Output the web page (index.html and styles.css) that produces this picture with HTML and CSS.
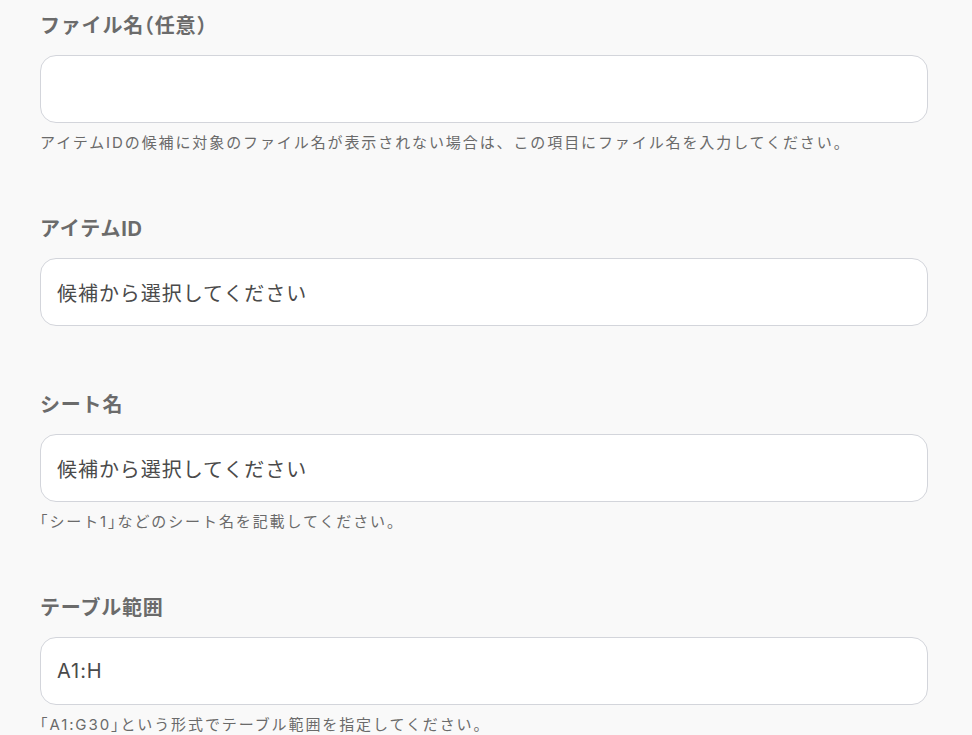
FILE: index.html
```html
<!DOCTYPE html>
<html lang="ja">
<head>
<meta charset="utf-8">
<link rel="stylesheet" href="styles.css">
</head>
<body>
<div class="form">
  <div class="field">
    <div class="label">ファイル名<span class="half">（</span>任意<span class="half">）</span></div>
    <div class="input"></div>
    <div class="hint">アイテムIDの候補に対象のファイル名が表示されない場合は、この項目にファイル名を入力してください。</div>
  </div>
  <div class="field field--nohint">
    <div class="label">アイテムID</div>
    <div class="input">候補から選択してください</div>
  </div>
  <div class="field">
    <div class="label">シート名</div>
    <div class="input">候補から選択してください</div>
    <div class="hint"><span class="half">「</span>シート1<span class="half">」</span>などのシート名を記載してください。</div>
  </div>
  <div class="field">
    <div class="label">テーブル範囲</div>
    <div class="input">A1:H</div>
    <div class="hint"><span class="half">「</span>A1:G30<span class="half">」</span>という形式でテーブル範囲を指定してください。</div>
  </div>
</div>
</body>
</html>
```
FILE: styles.css
```css
html, body {
  margin: 0;
  padding: 0;
  background: #f9f9f9;
}
body {
  font-family: Inter, "Noto Sans CJK JP", sans-serif;
  padding: 14px 44px 0 40px;
}
.form {
  display: flex;
  flex-direction: column;
  gap: 62px;
}
.field {
  display: flex;
  flex-direction: column;
}
.field--nohint {
  padding-bottom: 5px;
}
.label {
  font-size: 20px;
  line-height: 24px;
  font-weight: 700;
  letter-spacing: 0.8px;
  color: #6b6b6b;
  margin-bottom: 17px;
}
.half {
  font-feature-settings: "halt";
}
.input {
  box-sizing: border-box;
  height: 68px;
  background: #fff;
  border: 1px solid #d3d5db;
  border-radius: 16px;
  padding: 0 16px;
  display: flex;
  align-items: center;
  font-size: 20px;
  letter-spacing: 0.95px;
  color: #4a4a4a;
}
.hint {
  margin-top: 8px;
  font-size: 15px;
  line-height: 24px;
  letter-spacing: 1.9px;
  color: #6a6a6a;
}
```
